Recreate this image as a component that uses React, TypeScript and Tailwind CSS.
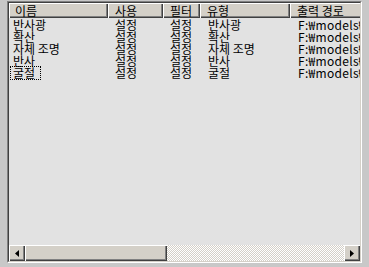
import React from 'react';

const font = { fontFamily: '"Noto Sans CJK KR", "Noto Sans", sans-serif' };

const rows = [
  { name: '반사광', use: '설정', filter: '설정', type: '반사광', path: 'F:₩models₩shaders' },
  { name: '확산', use: '설정', filter: '설정', type: '확산', path: 'F:₩models₩shaders' },
  { name: '자체 조명', use: '설정', filter: '설정', type: '자체 조명', path: 'F:₩models₩shaders' },
  { name: '반사', use: '설정', filter: '설정', type: '반사', path: 'F:₩models₩shaders' },
  { name: '굴절', use: '설정', filter: '설정', type: '굴절', path: 'F:₩models₩shaders' },
];

// column widths, last one runs past the edge
const cols = [
  { label: '이름', w: 'w-[99px]' },
  { label: '사용', w: 'w-[55px]' },
  { label: '필터', w: 'w-[37px]' },
  { label: '유형', w: 'w-[90px]' },
  { label: '출력 경로', w: 'w-[110px]' },
];

const raised =
  'bg-[#d4d0c8] shadow-[inset_1px_1px_#ffffff,inset_-1px_-1px_#404040,inset_-2px_-2px_#808080]';

const Arrow = ({ dir }: { dir: 'left' | 'right' }) => (
  <svg width="4" height="7" viewBox="0 0 4 7">
    {dir === 'left' ? <path d="M4 0 L0 3.5 L4 7 Z" fill="#000" /> : <path d="M0 0 L4 3.5 L0 7 Z" fill="#000" />}
  </svg>
);

export default function App() {
  return (
    <div className="w-[369px] h-[267px] bg-[#c8c8c8] pl-[7px] pt-[1px]" style={font}>
      {/* list view with sunken border */}
      <div className="w-[355px] h-[262px] border-t border-l border-[#808080] border-r border-b border-r-white border-b-white">
        <div className="w-full h-full flex flex-col border-t border-l border-[#404040] border-r border-b border-r-[#d4d0c8] border-b-[#d4d0c8] bg-[#e2e2e2] overflow-hidden">
          {/* header */}
          <div className="flex h-[15px] shrink-0">
            {cols.map((c, i) => (
              <div
                key={c.label}
                className={`${c.w} shrink-0 h-full ${raised} text-[12px] leading-[15px] text-black whitespace-nowrap ${
                  i === 0 ? 'pl-[6px]' : 'pl-[7px]'
                }`}
              >
                {c.label}
              </div>
            ))}
          </div>

          {/* rows */}
          <div className="flex-1 flex flex-col pt-[1px]">
            {rows.map((r, idx) => (
              <div key={idx} className="flex h-[12px] text-[12px] leading-[12px] text-black whitespace-nowrap">
                <div className="w-[99px] shrink-0 pl-[2px]">
                  <span
                    className={`inline-block pl-[2px] pr-[5px] h-[12px] ${
                      idx === rows.length - 1 ? 'outline outline-1 outline-dotted outline-black' : ''
                    }`}
                  >
                    {r.name}
                  </span>
                </div>
                <div className="w-[55px] shrink-0 pl-[7px]">{r.use}</div>
                <div className="w-[37px] shrink-0 pl-[7px]">{r.filter}</div>
                <div className="w-[90px] shrink-0 pl-[8px]">{r.type}</div>
                <div className="w-[110px] shrink-0 pl-[8px] tracking-[0.3px]">{r.path}</div>
              </div>
            ))}
          </div>

          {/* horizontal scrollbar */}
          <div className="flex h-[16px] shrink-0">
            <div className={`w-[16px] h-full ${raised} flex items-center justify-center`}>
              <Arrow dir="left" />
            </div>
            <div className={`w-[142px] h-full ${raised}`} />
            <div className="flex-1 h-full bg-[conic-gradient(#d4d0c8_25%,#ffffff_25%_50%,#d4d0c8_50%_75%,#ffffff_75%)] bg-size-[2px_2px]" />
            <div className={`w-[16px] h-full ${raised} flex items-center justify-center`}>
              <Arrow dir="right" />
            </div>
          </div>
        </div>
      </div>
    </div>
  );
}
